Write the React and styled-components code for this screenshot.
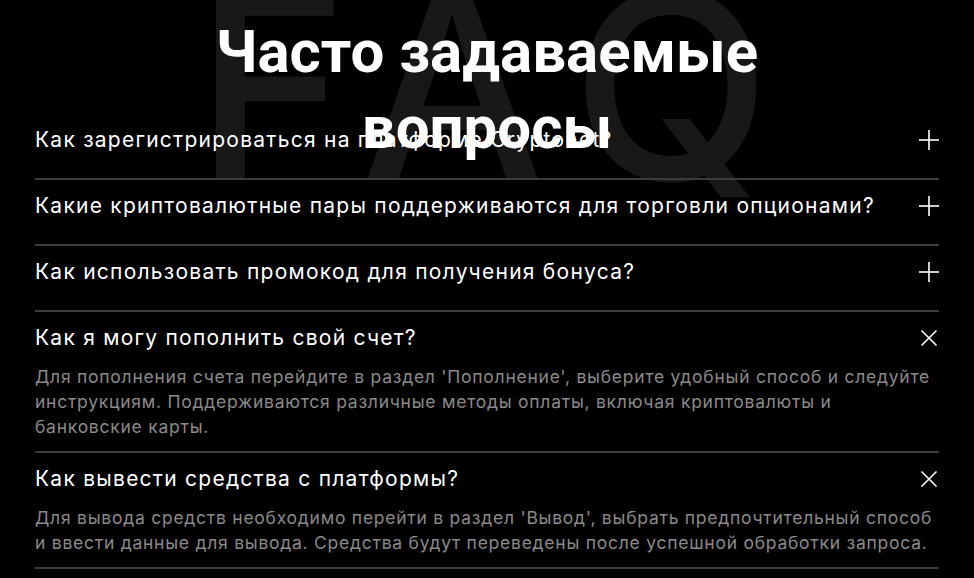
import React, { useState } from "react";
import styled, { createGlobalStyle } from "styled-components";

const GlobalStyle = createGlobalStyle`
  * {
    box-sizing: border-box;
  }
  body {
    margin: 0;
    background: #000;
    font-family: Inter, "Liberation Sans", sans-serif;
    overflow: hidden;
  }
`;

const faqs = [
  {
    q: "Как зарегистрироваться на платформе Cryptonet?",
    a: "Нажмите кнопку 'Регистрация' в правом верхнем углу, заполните форму и подтвердите адрес электронной почты.",
    open: false,
  },
  {
    q: "Какие криптовалютные пары поддерживаются для торговли опционами?",
    a: "Доступны основные пары: BTC/USDT, ETH/USDT и другие популярные активы.",
    open: false,
  },
  {
    q: "Как использовать промокод для получения бонуса?",
    a: "Введите промокод в разделе 'Бонусы' при пополнении счета.",
    open: false,
  },
  {
    q: "Как я могу пополнить свой счет?",
    a: "Для пополнения счета перейдите в раздел 'Пополнение', выберите удобный способ и следуйте инструкциям. Поддерживаются различные методы оплаты, включая криптовалюты и банковские карты.",
    open: true,
  },
  {
    q: "Как вывести средства с платформы?",
    a: "Для вывода средств необходимо перейти в раздел 'Вывод', выбрать предпочтительный способ и ввести данные для вывода. Средства будут переведены после успешной обработки запроса.",
    open: true,
  },
];

function ToggleIcon({ open }) {
  return (
    <IconBox viewBox="0 0 20 20">
      {open ? (
        <>
          <line x1="2.5" y1="2.5" x2="17.5" y2="17.5" />
          <line x1="17.5" y1="2.5" x2="2.5" y2="17.5" />
        </>
      ) : (
        <>
          <line x1="10" y1="0" x2="10" y2="20" />
          <line x1="0" y1="10" x2="20" y2="10" />
        </>
      )}
    </IconBox>
  );
}

function FaqItem({ item }) {
  const [open, setOpen] = useState(item.open);
  return (
    <Item>
      <Question onClick={() => setOpen(!open)}>
        <span>{item.q}</span>
        <ToggleIcon open={open} />
      </Question>
      <Answer>{open && item.a}</Answer>
    </Item>
  );
}

export default function App() {
  return (
    <Section>
      <GlobalStyle />
      <Hero>
        <Watermark>FAQ</Watermark>
        <Title>Часто задаваемые вопросы</Title>
      </Hero>
      <List>
        {faqs.map((item) => (
          <FaqItem key={item.q} item={item} />
        ))}
      </List>
    </Section>
  );
}

const Section = styled.section`
  position: relative;
  padding: 0 35px;
  height: 578px;
  overflow: hidden;
`;

const Hero = styled.div`
  position: relative;
  height: 114px;
  display: flex;
  justify-content: center;
`;

const Watermark = styled.div`
  position: absolute;
  top: -44px;
  left: 0;
  right: 0;
  padding-left: 28px;
  text-align: center;
  font-size: 260px;
  line-height: 260px;
  font-weight: 500;
  color: #181818;
  letter-spacing: 36px;
  user-select: none;
`;

const Title = styled.h2`
  position: relative;
  z-index: 2;
  margin: 14px 0 0;
  width: 600px;
  text-align: center;
  color: #fff;
  font-family: Roboto, "Liberation Sans", sans-serif;
  font-size: 60px;
  line-height: 76px;
  font-weight: 700;
`;

const List = styled.div`
  position: relative;
  z-index: 1;
  display: flex;
  flex-direction: column;
`;

const Item = styled.div`
  padding: 14px 0 0;
  border-bottom: 2px solid #3c3c3c;
`;

const Question = styled.button`
  display: flex;
  align-items: center;
  justify-content: space-between;
  width: 100%;
  padding: 0;
  border: none;
  background: none;
  color: #fff;
  font-family: inherit;
  font-size: 21px;
  line-height: 24px;
  letter-spacing: 1.25px;
  text-align: left;
  cursor: pointer;
`;

const Answer = styled.div`
  margin-top: 14px;
  padding-bottom: 12px;
  color: #8a8a8a;
  font-size: 17.5px;
  line-height: 25px;
  letter-spacing: 0.75px;
`;

const IconBox = styled.svg`
  width: 20px;
  height: 20px;
  flex-shrink: 0;
  stroke: #fff;
  stroke-width: 1.6;
`;
